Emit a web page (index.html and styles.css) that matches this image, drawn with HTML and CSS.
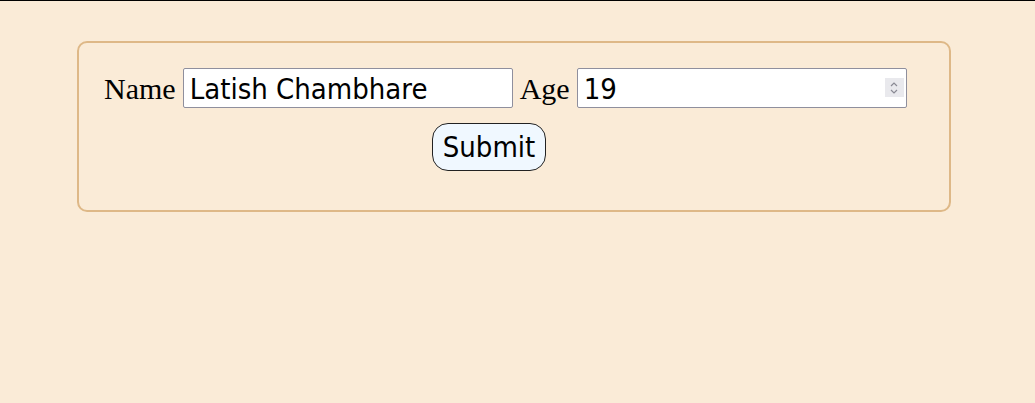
FILE: index.html
```html
<!DOCTYPE html>
<html>
<head>
<meta charset="utf-8">
<link rel="stylesheet" href="styles.css">
</head>
<body>
<div class="card">
  <form class="form">
    <div class="row">
      <label class="label" for="name">Name</label>
      <input class="field" id="name" type="text" value="Latish Chambhare">
      <label class="label" for="age">Age</label>
      <span class="num-wrap">
        <input class="field" id="age" type="text" value="19">
        <span class="spin"><svg width="12" height="18" viewBox="0 0 12 18"><path d="M3 7 L6 4 L9 7 M3 11 L6 14 L9 11" fill="none" stroke="#8a8a94" stroke-width="1.2"/></svg></span>
      </span>
    </div>
    <div class="actions">
      <button class="submit" type="button">Submit</button>
    </div>
  </form>
</div>
</body>
</html>
```
FILE: styles.css
```css
html, body {
  margin: 0;
  padding: 0;
}
body {
  background: #faebd7;
  border-top: 1px solid #000;
  min-height: 402px;
}
.card {
  box-sizing: border-box;
  width: 874px;
  margin: 40px 0 0 77px;
  border: 2px solid #deb887;
  border-radius: 10px;
  padding: 25px 26px 39px 25px;
}
.form {
  margin: 0;
}
.row {
  display: flex;
  align-items: baseline;
  gap: 7px;
  height: 40px;
}
.label {
  font-family: "Liberation Serif", "Times New Roman", serif;
  font-size: 30px;
  color: #000;
}
.field {
  box-sizing: border-box;
  width: 330px;
  height: 40px;
  margin: 0;
  padding: 1px 6px 0 6px;
  border: 1px solid #8f8f9d;
  border-radius: 2px;
  background: #fff;
  font-family: "DejaVu Sans Condensed", "DejaVu Sans", sans-serif;
  font-stretch: condensed;
  font-size: 29px;
  color: #000;
  outline: none;
}
.num-wrap {
  position: relative;
  display: block;
  width: 330px;
  height: 40px;
}
.num-wrap .field {
  display: block;
}
.spin {
  position: absolute;
  right: 3px;
  top: 10px;
  width: 19px;
  height: 19px;
  background: #e9e9ed;
  display: flex;
  align-items: center;
  justify-content: center;
}
.actions {
  margin-top: 15px;
  padding-left: 328px;
}
.submit {
  box-sizing: border-box;
  width: 114px;
  height: 48px;
  padding: 0;
  border: 1px solid #222;
  border-radius: 16px;
  background: #f0f8ff;
  font-family: "DejaVu Sans Condensed", "DejaVu Sans", sans-serif;
  font-stretch: condensed;
  font-size: 29px;
  color: #000;
}
```
